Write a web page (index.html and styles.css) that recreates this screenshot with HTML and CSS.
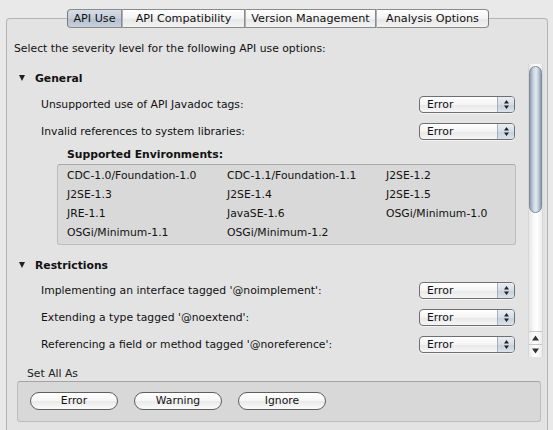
FILE: index.html
```html
<!DOCTYPE html>
<html>
<head>
<meta charset="utf-8">
<link rel="stylesheet" href="styles.css">
</head>
<body>
<div class="window">
  <div class="tabbar">
    <div class="tab sel w1">API Use</div>
    <div class="tab w2">API Compatibility</div>
    <div class="tab w3">Version Management</div>
    <div class="tab w4">Analysis Options</div>
  </div>
  <div class="panel">
    <div class="intro">Select the severity level for the following API use options:</div>
    <div class="scrollarea">
      <div class="content">
        <div class="section"><span class="tri"></span><span class="stitle">General</span></div>
        <div class="row"><span class="label">Unsupported use of API Javadoc tags:</span><div class="select"><span class="sval">Error</span><span class="sarrows"><svg width="7" height="11" viewBox="0 0 7 11"><path d="M3.5 1 L6 4.5 L1 4.5 Z M3.5 10 L6 6.5 L1 6.5 Z" fill="#222"/></svg></span></div></div>
        <div class="row"><span class="label">Invalid references to system libraries:</span><div class="select"><span class="sval">Error</span><span class="sarrows"><svg width="7" height="11" viewBox="0 0 7 11"><path d="M3.5 1 L6 4.5 L1 4.5 Z M3.5 10 L6 6.5 L1 6.5 Z" fill="#222"/></svg></span></div></div>
        <div class="envlabel">Supported Environments:</div>
        <div class="envbox">
          <span>CDC-1.0/Foundation-1.0</span><span>CDC-1.1/Foundation-1.1</span><span>J2SE-1.2</span>
          <span>J2SE-1.3</span><span>J2SE-1.4</span><span>J2SE-1.5</span>
          <span>JRE-1.1</span><span>JavaSE-1.6</span><span>OSGi/Minimum-1.0</span>
          <span>OSGi/Minimum-1.1</span><span>OSGi/Minimum-1.2</span><span></span>
        </div>
        <div class="section sec2"><span class="tri"></span><span class="stitle">Restrictions</span></div>
        <div class="row"><span class="label">Implementing an interface tagged '@noimplement':</span><div class="select"><span class="sval">Error</span><span class="sarrows"><svg width="7" height="11" viewBox="0 0 7 11"><path d="M3.5 1 L6 4.5 L1 4.5 Z M3.5 10 L6 6.5 L1 6.5 Z" fill="#222"/></svg></span></div></div>
        <div class="row"><span class="label">Extending a type tagged '@noextend':</span><div class="select"><span class="sval">Error</span><span class="sarrows"><svg width="7" height="11" viewBox="0 0 7 11"><path d="M3.5 1 L6 4.5 L1 4.5 Z M3.5 10 L6 6.5 L1 6.5 Z" fill="#222"/></svg></span></div></div>
        <div class="row"><span class="label">Referencing a field or method tagged '@noreference':</span><div class="select"><span class="sval">Error</span><span class="sarrows"><svg width="7" height="11" viewBox="0 0 7 11"><path d="M3.5 1 L6 4.5 L1 4.5 Z M3.5 10 L6 6.5 L1 6.5 Z" fill="#222"/></svg></span></div></div>
      </div>
      <div class="scrollbar">
        <div class="track"><div class="thumb"></div></div>
        <div class="arrow up"><svg width="7" height="6" viewBox="0 0 7 6"><path d="M3.5 0.5 L7 5.5 L0 5.5 Z" fill="#333"/></svg></div>
        <div class="arrow down"><svg width="7" height="6" viewBox="0 0 7 6"><path d="M3.5 5.5 L7 0.5 L0 0.5 Z" fill="#333"/></svg></div>
      </div>
    </div>
    <div class="setlabel">Set All As</div>
    <div class="setbox">
      <button class="pill">Error</button>
      <button class="pill">Warning</button>
      <button class="pill">Ignore</button>
    </div>
  </div>
</div>
</body>
</html>
```
FILE: styles.css
```css
html, body {
  margin: 0;
  padding: 0;
  background: #e9e9e9;
  width: 553px;
  height: 430px;
  overflow: hidden;
}
body {
  font-family: "DejaVu Sans", Verdana, sans-serif;
  font-size: 10.8px;
  color: #111;
}
.window {
  padding-top: 9px;
}
.tabbar {
  display: flex;
  justify-content: center;
  position: relative;
  z-index: 2;
  margin-bottom: -10px;
  padding-left: 3px;
}
.tab {
  height: 17px;
  line-height: 17px;
  text-align: center;
  border: 1px solid #8a8a8a;
  border-left: 1px solid #b0b0b0;
  background: linear-gradient(#ffffff, #f3f3f3 50%, #e6e6e6 51%, #f2f2f2);
  font-size: 11.2px;
  color: #111;
  white-space: nowrap;
}
.tab.sel {
  border-left: 1px solid #7a7a7a;
  border-radius: 4px 0 0 4px;
  background: linear-gradient(#d6dde6, #c3ccd8 50%, #b5c0ce 51%, #c7d0dc);
}
.tab.w4 { border-right: 1px solid #7a7a7a; border-radius: 0 4px 4px 0; }
.w1 { width: 53px; }
.w2 { width: 121px; }
.w3 { width: 129px; }
.w4 { width: 111px; }
.panel {
  margin: 0 5px 0 6px;
  border: 1px solid #b4b4b4;
  border-bottom: none;
  border-radius: 4px 4px 0 0;
  background: #e3e3e3;
  height: 412px;
  box-sizing: border-box;
  padding-top: 23px;
  overflow: hidden;
}
.intro {
  padding-left: 7px;
  height: 13px;
  line-height: 13px;
  white-space: nowrap;
}
.scrollarea {
  margin-top: 9px;
  margin-left: 7px;
  width: 529px;
  height: 293px;
  display: flex;
  overflow: hidden;
}
.content {
  flex: 1;
  height: 293px;
  overflow: hidden;
  padding-top: 1px;
  box-sizing: border-box;
}
.section {
  height: 26px;
  display: flex;
  align-items: center;
  padding-left: 5px;
}
.sec2 {
  margin-top: 8px;
  height: 24px;
}
.tri {
  width: 0;
  height: 0;
  border-left: 3.5px solid transparent;
  border-right: 3.5px solid transparent;
  border-top: 6px solid #222;
  margin-right: 10px;
}
.stitle {
  font-weight: bold;
}
.row {
  height: 27px;
  display: flex;
  align-items: center;
  padding-left: 27px;
  justify-content: space-between;
  padding-right: 13px;
  white-space: nowrap;
}
.select {
  width: 96px;
  height: 17px;
  flex: none;
  box-sizing: border-box;
  border: 1px solid #6f6f6f;
  border-radius: 4px;
  display: flex;
  background: linear-gradient(#ffffff, #f4f4f4 50%, #e8e8e8 51%, #f6f6f6);
  box-shadow: 0 1px 0 rgba(255,255,255,0.6);
}
.sval {
  flex: 1;
  padding-left: 7px;
  line-height: 15px;
}
.sarrows {
  width: 16px;
  border-left: 1px solid #a8b0bc;
  display: flex;
  align-items: center;
  justify-content: center;
  border-radius: 0 3px 3px 0;
  background: linear-gradient(#e9eef4, #d5dde7 50%, #c6d0dc 51%, #dbe2ea);
}
.envlabel {
  height: 19px;
  line-height: 19px;
  padding-left: 53px;
  font-weight: bold;
}
.envbox {
  margin-left: 43px;
  width: 459px;
  height: 81px;
  box-sizing: border-box;
  border: 1px solid #bdbdbd;
  border-top-color: #a9a9a9;
  border-radius: 3px;
  background: #d9d9d9;
  padding: 1px 0 1px 9px;
  display: grid;
  grid-template-columns: 160px 159px 1fr;
  grid-auto-rows: 19px;
  align-items: center;
  white-space: nowrap;
}
.scrollbar {
  width: 15px;
  display: flex;
  flex-direction: column;
  background: #f4f4f4;
  border-left: 1px solid #d6d6d6;
  border-right: 1px solid #d6d6d6;
  box-sizing: border-box;
}
.track {
  flex: 1;
  padding-top: 2px;
  background: linear-gradient(90deg, #e6e6e6, #fafafa 40%, #ffffff 60%, #ececec);
}
.thumb {
  height: 145px;
  border-radius: 7px;
  border: 1px solid #7d8b9c;
  background: linear-gradient(90deg, #8e9db0, #c9d3df 30%, #e3e9f0 55%, #b8c5d3 80%, #8999ad);
}
.arrow {
  height: 12px;
  display: flex;
  align-items: center;
  justify-content: center;
  background: linear-gradient(90deg, #ececec, #ffffff 50%, #ececec);
  border-top: 1px solid #c8c8c8;
}
.setlabel {
  margin-top: 10px;
  padding-left: 20px;
  height: 13px;
  line-height: 13px;
  color: #222;
}
.setbox {
  margin: 1px 0 0 10px;
  width: 524px;
  height: 41px;
  box-sizing: border-box;
  border: 1px solid #bdbdbd;
  border-top-color: #a4a4a4;
  border-radius: 3px;
  background: #d8d8d8;
  display: flex;
  align-items: center;
  gap: 16px;
  padding-left: 12px;
  padding-bottom: 1px;
}
.pill {
  width: 88px;
  height: 18px;
  border: 1px solid #5e5e5e;
  border-radius: 9px;
  background: linear-gradient(#ffffff, #f6f6f6 50%, #e9e9e9 51%, #fbfbfb);
  font-family: "DejaVu Sans", Verdana, sans-serif;
  font-size: 10.8px;
  color: #111;
  padding: 0;
  line-height: 16px;
}
```
